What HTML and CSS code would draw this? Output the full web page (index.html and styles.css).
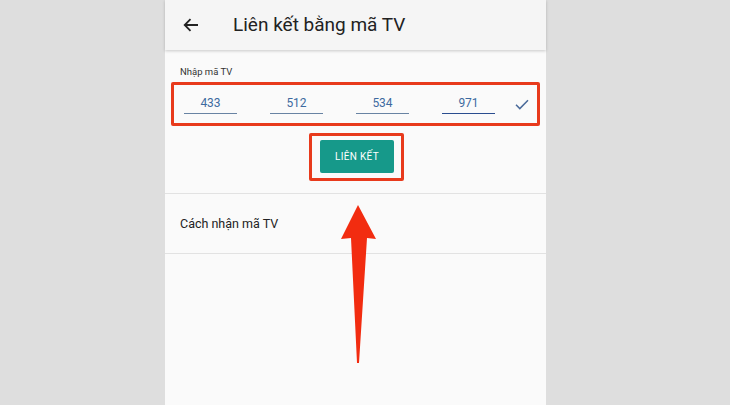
FILE: index.html
```html
<!DOCTYPE html>
<html lang="vi">
<head>
<meta charset="utf-8">
<link rel="stylesheet" href="styles.css">
</head>
<body>
<div class="phone">
  <header class="appbar">
    <svg class="back" width="16" height="14" viewBox="0 0 16 14"><path d="M15 7H2M7.5 1.2L1.7 7l5.8 5.8" fill="none" stroke="#222" stroke-width="1.8"/></svg>
    <h1 class="title">Liên kết bằng mã TV</h1>
  </header>
  <section class="entry">
    <div class="label">Nhập mã TV</div>
    <div class="code-row">
      <div class="field">433</div>
      <div class="field">512</div>
      <div class="field">534</div>
      <div class="field active">971</div>
      <svg class="check" width="14" height="11" viewBox="0 0 14 11"><path d="M1 5.8l3.8 3.8L13 1.2" fill="none" stroke="#4a6a9a" stroke-width="1.5"/></svg>
    </div>
    <div class="btn-wrap">
      <div class="btn-hl"><button class="btn">LIÊN KẾT</button></div>
    </div>
  </section>
  <div class="row">Cách nhận mã TV</div>
  <svg class="big-arrow" width="60" height="170" viewBox="0 0 60 170"><path d="M28 0 L46 34 L37 33 L29 158 L27 158 L21 33 L11 34 Z" fill="#f22c10"/></svg>
</div>
</body>
</html>
```

FILE: styles.css
```css
html, body { margin: 0; padding: 0; }
body {
  background: #dedede;
  font-family: Roboto, "Noto Sans", sans-serif;
  width: 730px;
  height: 405px;
  overflow: hidden;
}
.phone {
  position: relative;
  margin-left: 165px;
  width: 381px;
  height: 405px;
  background: #fafafa;
}
.appbar {
  height: 50px;
  background: #f5f5f5;
  box-shadow: 0 1px 3px rgba(0,0,0,0.2);
  display: flex;
  align-items: center;
  position: relative;
  z-index: 1;
}
.back { margin-left: 18px; margin-top: -1px; }
.title {
  margin: 0 0 0 34px;
  font-weight: 400;
  font-size: 19px;
  color: #222;
  margin-top: -2px;
}
.entry {
  padding-top: 15px;
  border-bottom: 1px solid #e2e2e2;
  height: 144px;
  box-sizing: border-box;
}
.label {
  font-size: 9.5px;
  color: #333;
  margin-left: 15px;
  height: 14px;
  line-height: 14px;
}
.code-row {
  margin: 3px 6px 0;
  height: 44px;
  box-sizing: border-box;
  border: 3px solid #e83a1c;
  border-radius: 2px;
  display: flex;
  align-items: flex-start;
  padding-left: 10px;
}
.field {
  width: 53px;
  margin-right: 33px;
  margin-top: 11px;
  height: 17px;
  border-bottom: 1.5px solid #6883a3;
  text-align: center;
  font-size: 12px;
  line-height: 15px;
  color: #3d6aa0;
}
.field.active { border-bottom-color: #2a4d8f; margin-right: 20px; }
.check { margin-top: 14px; }
.btn-wrap {
  display: flex;
  justify-content: center;
  margin-top: 7px;
  padding-left: 2px;
}
.btn-hl {
  width: 95px;
  height: 48px;
  box-sizing: border-box;
  border: 3px solid #e83a1c;
  border-radius: 2px;
  padding: 4px 0 0 8px;
}
.btn {
  display: block;
  width: 74px;
  height: 33px;
  border: 0;
  border-radius: 2px;
  background: #16998a;
  color: #fff;
  font-family: Roboto, "Noto Sans", sans-serif;
  font-size: 10px;
  font-weight: 400;
  letter-spacing: 0.3px;
  padding: 0;
}
.row {
  height: 60px;
  box-sizing: border-box;
  border-bottom: 1px solid #e2e2e2;
  padding-left: 15px;
  display: flex;
  align-items: center;
  font-size: 12.5px;
  color: #222;
}
.big-arrow {
  position: absolute;
  left: 165px;
  top: 205px;
}
```
